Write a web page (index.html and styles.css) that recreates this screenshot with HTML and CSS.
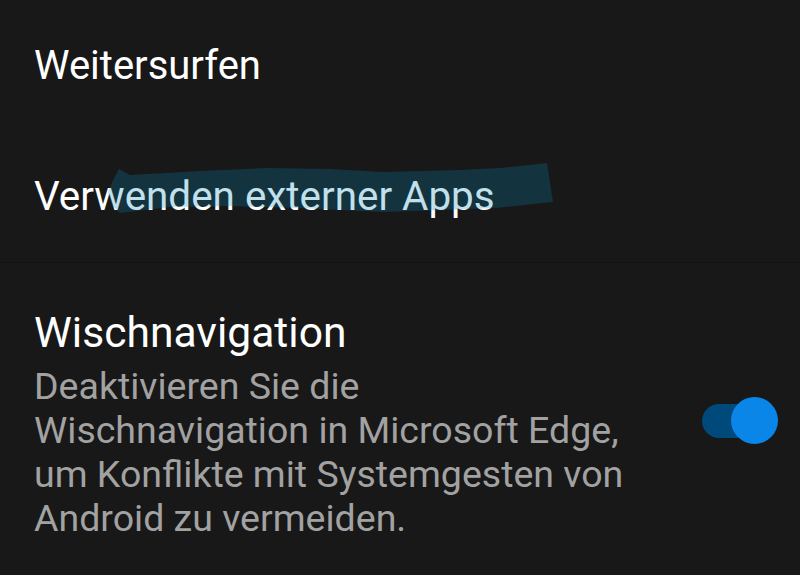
FILE: index.html
```html
<!DOCTYPE html>
<html lang="de">
<head>
<meta charset="utf-8">
<title>Einstellungen</title>
<link rel="stylesheet" href="styles.css">
</head>
<body>
<main class="screen">
  <ul class="settings">
    <li class="row row-simple">Weitersurfen</li>
    <li class="row row-simple row-divided">Verwenden externer Apps</li>
    <li class="row row-toggle">
      <div class="row-text">
        <div class="row-title">Wischnavigation</div>
        <div class="row-desc">Deaktivieren Sie die Wischnavigation in Microsoft Edge, um Konflikte mit Systemgesten von Android zu vermeiden.</div>
      </div>
      <div class="switch" role="switch" aria-checked="true">
        <span class="switch-track"></span>
        <span class="switch-thumb"></span>
      </div>
    </li>
  </ul>
  <svg class="marker" width="800" height="575" viewBox="0 0 800 575" aria-hidden="true">
    <polygon points="119,169 130,175 200,171 268,168 330,169 383,172 459,170 500,168 547,163 553,202 497,208 440,210 383,212 300,208 230,206 170,207 120,213 112,205 108,192 113,180"/>
  </svg>
</main>
</body>
</html>
```
FILE: styles.css
```css
html, body {
  margin: 0;
  padding: 0;
  background: #181818;
}
body {
  font-family: Roboto, "Noto Sans", sans-serif;
  color: #ffffff;
}
.screen {
  position: relative;
  width: 800px;
  height: 575px;
  overflow: hidden;
}
.settings {
  list-style: none;
  margin: 0;
  padding: 0;
}
.row {
  padding: 0 34px;
}
.row-simple {
  font-size: 40px;
  line-height: 48px;
  padding-top: 42px;
  padding-bottom: 41px;
}
.row-simple + .row-simple {
  font-size: 40.4px;
}
.row-divided {
  border-bottom: 1px solid #131313;
}
.row-toggle {
  display: flex;
  align-items: flex-start;
  justify-content: space-between;
  padding-top: 41px;
  padding-right: 22px;
}
.row-text {
  width: 602px;
}
.row-title {
  font-size: 42.6px;
  line-height: 56px;
}
.row-desc {
  margin-top: 4px;
  font-size: 37.5px;
  line-height: 44px;
  color: #a2a2a2;
}
.switch {
  position: relative;
  width: 76px;
  height: 47px;
  margin-top: 93px;
}
.switch-track {
  position: absolute;
  left: 0;
  top: 7px;
  width: 66px;
  height: 34px;
  border-radius: 17px;
  background: #00497b;
}
.switch-thumb {
  position: absolute;
  right: 0;
  top: 0;
  width: 47px;
  height: 47px;
  border-radius: 50%;
  background: #0a85e8;
}
.marker {
  position: absolute;
  left: 0;
  top: 0;
  pointer-events: none;
}
.marker polygon {
  fill: rgba(4, 132, 180, 0.25);
}
```
